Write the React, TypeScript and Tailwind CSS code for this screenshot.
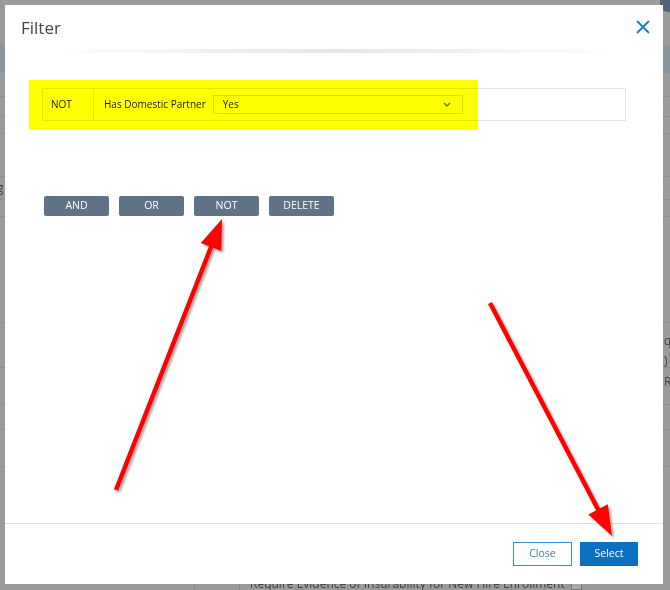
import React from "react";

const font = { fontFamily: '"Open Sans", "Liberation Sans", sans-serif' };

function Arrow({ x1, y1, x2, y2 }: { x1: number; y1: number; x2: number; y2: number }) {
  const dx = x2 - x1;
  const dy = y2 - y1;
  const len = Math.sqrt(dx * dx + dy * dy);
  const ux = dx / len;
  const uy = dy / len;
  const hl = 30;
  const hw = 11;
  const bx = x2 - ux * hl;
  const by = y2 - uy * hl;
  const px = -uy;
  const py = ux;
  const pts = `${x2},${y2} ${bx + px * hw},${by + py * hw} ${bx - px * hw},${by - py * hw}`;
  return (
    <g filter="url(#sh)">
      <line x1={x1} y1={y1} x2={bx + ux * 4} y2={by + uy * 4} stroke="#ff0000" strokeWidth={4.5} />
      <polygon points={pts} fill="#ff0000" />
    </g>
  );
}

export default function App() {
  return (
    <div className="relative w-[670px] h-[590px] overflow-hidden bg-[#9a9a9a]" style={font}>
      {/* dimmed page behind the dialog */}
      <div className="flex flex-col w-[670px] h-[590px] text-[12px] text-[#444]">
        <div className="h-[45px] flex justify-end">
          <div className="w-[16px] h-[20px] -mt-[8px] -mr-[6px] rounded-full bg-[#51657a]" />
        </div>
        <div className="h-[28px] bg-[#8a949e]" />
        <div className="h-[24px] border-b border-[#8d8d8d]" />
        <div className="h-[20px] border-b border-[#8d8d8d]" />
        <div className="h-[17px] border-b border-[#8d8d8d]" />
        <div className="h-[43px] border-b border-[#8d8d8d]" />
        <div className="h-[23px] border-b border-[#8d8d8d] flex items-center -ml-[3px]">g</div>
        <div className="h-[17px] border-b border-[#8d8d8d]" />
        <div className="h-[106px] border-b border-[#8d8d8d]" />
        <div className="h-[45px] border-b border-[#8d8d8d] flex justify-end">
          <div className="w-[6px] pt-[8px] leading-[20px]">
            <div>qu</div>
            <div>)</div>
          </div>
        </div>
        <div className="h-[37px] border-b border-[#8d8d8d] flex justify-end">
          <div className="w-[6px] pt-[5px]">Re</div>
        </div>
        <div className="h-[25px] border-b border-[#8d8d8d]" />
        <div className="h-[37px] border-b border-[#8d8d8d]" />
        <div className="flex-1 flex items-end">
          <div className="h-[11px] ml-[194px] w-[46px] border-l border-r border-[#888]" />
          <div className="ml-[10px] -mb-[3px] whitespace-nowrap flex items-center gap-[6px]">
            <span>Require Evidence of Insurability for New Hire Enrollment</span>
            <span className="inline-block w-[11px] h-[11px] border border-[#777] bg-[#aaa]" />
          </div>
        </div>
      </div>

      {/* modal dialog */}
      <div className="absolute left-[5px] top-[5px] w-[658px] h-[579px] bg-white flex flex-col">
        <div className="h-[44px] pl-[16px] pr-[13px] flex items-center justify-between shrink-0">
          <div className="text-[17px] text-[#444] leading-none">Filter</div>
          <svg width="14" height="14" viewBox="0 0 14 14">
            <path d="M1 1 L13 13 M13 1 L1 13" stroke="#1b7bc8" strokeWidth="1.8" fill="none" />
          </svg>
        </div>
        <div className="h-[4px] mx-[40px] bg-gradient-to-r from-white via-[#e6e6e6] to-white shrink-0" />
        <div className="flex-1 relative px-[37px] pt-[35px]">
          <div className="h-[33px] border border-[#e6e6e6] flex items-center text-[10px] text-[#222]">
            <div className="w-[51px] h-full border-r border-[#e6e6e6] flex items-center pl-[8px]">NOT</div>
            <div className="pl-[10px] pr-[7px]">Has Domestic Partner</div>
            <div className="w-[250px] h-[19px] border border-[#dcdcdc] flex items-center justify-between pl-[9px] pr-[11px]">
              <span>Yes</span>
              <svg width="8" height="5" viewBox="0 0 8 5">
                <path d="M1 1 L4 4 L7 1" stroke="#4b8a96" strokeWidth="1.5" fill="none" />
              </svg>
            </div>
          </div>
          <div className="mt-[75px] ml-[2px] flex gap-[10px]">
            {["AND", "OR", "NOT", "DELETE"].map((t) => (
              <div
                key={t}
                className="w-[65px] h-[20px] rounded-[2px] bg-[#5f7286] text-white text-[10.5px] font-medium flex items-center justify-center"
              >
                {t}
              </div>
            ))}
          </div>
          {/* highlighter mark */}
          <div className="absolute left-[24px] top-[27px] w-[449px] h-[50px] bg-[#ffff00] mix-blend-multiply" />
        </div>
        <div className="h-[61px] border-t border-[#e0e0e0] flex items-center justify-end gap-[8px] pr-[25px] shrink-0">
          <div className="w-[59px] h-[24px] border border-[#3a8fd3] text-[#3a7fc0] text-[10.5px] flex items-center justify-center">
            Close
          </div>
          <div className="w-[58px] h-[24px] bg-[#0a70c2] text-white text-[10.5px] flex items-center justify-center">
            Select
          </div>
        </div>
      </div>

      {/* annotation arrows */}
      <svg className="absolute left-0 top-0" width="670" height="590" viewBox="0 0 670 590">
        <defs>
          <filter id="sh" x="-20%" y="-20%" width="140%" height="140%">
            <feDropShadow dx="2" dy="2" stdDeviation="1.2" floodColor="#000" floodOpacity="0.35" />
          </filter>
        </defs>
        <Arrow x1={116} y1={490} x2={222} y2={219} />
        <Arrow x1={490} y1={303} x2={612} y2={536} />
      </svg>
    </div>
  );
}
